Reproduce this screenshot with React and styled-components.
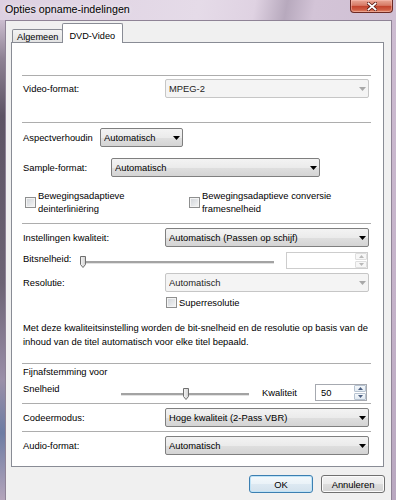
import React from "react";
import styled, { createGlobalStyle } from "styled-components";

const Global = createGlobalStyle`
  html, body { margin: 0; padding: 0; background: #d5c5d8; }
  body {
    font-family: "Liberation Sans", Arial, sans-serif;
    font-size: 9.4px;
    color: #000;
  }
  #root { width: 396px; height: 500px; overflow: hidden; }
`;

const Frame = styled.div`
  width: 396px;
  height: 500px;
  display: grid;
  grid-template-columns: 5px 1fr 4px;
  grid-template-rows: 20px 1fr;
  background: #d6c7d9;
  overflow: hidden;
`;

const TitleBar = styled.div`
  grid-column: 1 / 4;
  display: flex;
  align-items: flex-start;
  padding: 0 3px 0 5px;
  background: linear-gradient(100deg, #ddd0e1 0%, #e5dbe8 50%, #dfd2e2 64%, #b7a9bd 72%, #d3c4d7 79%, #d0c0d4 100%);
`;

const Title = styled.div`
  flex: 1;
  font-size: 10.7px;
  line-height: 18px;
  color: #000;
  white-space: nowrap;
  text-shadow: 0 0 5px rgba(255, 255, 255, 0.9);
`;

const CloseButton = styled.div`
  width: 43px;
  height: 13px;
  box-sizing: border-box;
  display: flex;
  align-items: center;
  justify-content: center;
  border: 1px solid #6d2a24;
  border-top: none;
  border-radius: 0 0 4px 4px;
  background: linear-gradient(#e9a796 0%, #d77a66 45%, #c2432d 52%, #cf5c43 80%, #e08d6e 100%);
  box-shadow: inset 0 0 0 1px rgba(255, 200, 190, 0.45);
`;

const SideLeft = styled.div`
  background: linear-gradient(#cbbdcf 0%, #8d8193 8%, #5c5363 20%, #6c6374 55%, #9a8fa8 75%, #6d7ca3 86%, #b4a5bb 100%);
`;

const SideRight = styled.div`
  background: linear-gradient(#cdbcd1 0%, #c4b2c9 60%, #b9a8c0 100%);
`;

const Client = styled.div`
  background: #f0f0f0;
  border: 1px solid #8f8396;
  border-bottom: none;
  display: flex;
  flex-direction: column;
  padding: 2px 7px 0 5px;
  min-width: 0;
`;

const TabStrip = styled.div`
  display: flex;
  align-items: flex-end;
  height: 19px;
  padding-left: 1px;
  position: relative;
  z-index: 1;
`;

const Tab = styled.div`
  box-sizing: border-box;
  height: ${(p) => (p.$active ? 20 : 13)}px;
  margin-bottom: ${(p) => (p.$active ? -1 : 0)}px;
  margin-left: ${(p) => (p.$active ? -1 : 0)}px;
  padding: ${(p) => (p.$active ? "7px 7px 0 6px" : "2px 4px 0 4px")};
  border: 1px solid #898c95;
  border-bottom: none;
  border-radius: 2px 2px 0 0;
  background: ${(p) => (p.$active ? "#fff" : "linear-gradient(#f3f3f3, #e3e3e3)")};
  font-size: 9.2px;
  line-height: 11px;
  white-space: nowrap;
`;

const Panel = styled.div`
  flex: none;
  height: 425px;
  box-sizing: border-box;
  border: 1px solid #898c95;
  background: #fff;
  padding: 32px 12px 0 10px;
  display: flex;
  flex-direction: column;
`;

const Divider = styled.div`
  flex: none;
  height: 1px;
  background: #adadad;
  margin-top: ${(p) => p.$mt || 0}px;
`;

const Row = styled.div`
  flex: none;
  display: flex;
  align-items: center;
  height: ${(p) => p.$h || 19}px;
  margin-top: ${(p) => p.$mt || 0}px;
`;

const Label = styled.div`
  flex: none;
  width: ${(p) => p.$w}px;
  box-sizing: border-box;
  padding-left: 1px;
  white-space: nowrap;
  line-height: 14px;
  align-self: ${(p) => (p.$top ? "flex-start" : "center")};
  margin-top: ${(p) => p.$mt || 0}px;
`;

const SelectBox = styled.div`
  flex: none;
  width: ${(p) => p.$w}px;
  height: 19px;
  box-sizing: border-box;
  display: flex;
  align-items: center;
  padding-left: 3px;
  border: 1px solid ${(p) => (p.$disabled ? "#c6c6c6" : "#7f7f7f")};
  border-radius: 2px;
  background: ${(p) =>
    p.$disabled ? "#f4f4f4" : "linear-gradient(#f3f3f3 0%, #ebebeb 50%, #dfdfdf 51%, #d4d4d4 100%)"};
  color: ${(p) => (p.$disabled ? "#1e1e1e" : "#000")};
`;

const SelectText = styled.span`
  flex: 1;
  white-space: nowrap;
  overflow: hidden;
`;

const Arrow = styled.svg`
  flex: none;
  margin-right: 2px;
`;

const CheckGroup = styled.div`
  flex: none;
  display: flex;
  align-items: center;
  gap: 2px;
  width: ${(p) => (p.$w ? `${p.$w}px` : "auto")};
  padding-left: ${(p) => p.$pl || 0}px;
  box-sizing: border-box;
  line-height: 13px;
  white-space: nowrap;
`;

const CheckBox = styled.div`
  flex: none;
  width: 11px;
  height: 11px;
  box-sizing: border-box;
  border: 1px solid #8e8f8f;
  background: linear-gradient(135deg, #cfd3d8 0%, #e6e8ea 60%, #f7f7f7 100%);
  box-shadow: inset 0 0 0 1px #f4f4f4;
`;

const Spacer = styled.div`
  flex: none;
  width: ${(p) => p.$w}px;
`;

const SliderWrap = styled.div`
  flex: none;
  position: relative;
  width: ${(p) => p.$w}px;
  height: 17px;
  align-self: flex-start;
`;

const Track = styled.div`
  position: absolute;
  left: 0;
  right: 0;
  top: ${(p) => p.$top}px;
  height: 2px;
  background: #a3a3a3;
  box-shadow: 0 1px 0 #e2e2e2;
`;

const Thumb = styled.svg`
  position: absolute;
  top: ${(p) => p.$top}px;
`;

const SpinBox = styled.div`
  flex: none;
  width: ${(p) => p.$w}px;
  height: 17px;
  box-sizing: border-box;
  display: flex;
  border: 1px solid ${(p) => (p.$disabled ? "#cdcdcd" : "#a6a9b0")};
  background: #fff;
  margin-left: ${(p) => p.$ml || 0}px;
`;

const SpinValue = styled.div`
  flex: 1;
  padding-left: 5px;
  line-height: 15px;
`;

const SpinButtons = styled.div`
  flex: none;
  width: 12px;
  display: flex;
  flex-direction: column;
  gap: 1px;
`;

const SpinButton = styled.div`
  flex: 1;
  display: flex;
  align-items: center;
  justify-content: center;
  border: 1px solid ${(p) => (p.$disabled ? "#dedede" : "#b7c3d1")};
  border-radius: 1px;
  background: ${(p) => (p.$disabled ? "#f7f7f7" : "linear-gradient(#f4f8fb, #e2eaf2)")};
`;

const Paragraph = styled.div`
  flex: none;
  margin-top: ${(p) => p.$mt || 0}px;
  padding-left: 1px;
  line-height: 14px;
  white-space: nowrap;
`;

const TextLine = styled.div`
  flex: none;
  margin-left: ${(p) => p.$ml || 0}px;
  width: ${(p) => (p.$w ? `${p.$w}px` : "auto")};
  white-space: nowrap;
`;

const ButtonRow = styled.div`
  flex: none;
  display: flex;
  justify-content: flex-end;
  gap: 8px;
  margin-top: 8px;
  margin-right: -1px;
`;

const Button = styled.div`
  width: 64px;
  height: 18px;
  box-sizing: border-box;
  display: flex;
  align-items: center;
  justify-content: center;
  border: 1px solid ${(p) => (p.$default ? "#3c7fb1" : "#707070")};
  border-radius: 3px;
  background: ${(p) =>
    p.$default
      ? "linear-gradient(#f4f9fc 0%, #eaf2f8 50%, #dde9f2 51%, #d3e1ec 100%)"
      : "linear-gradient(#f2f2f2 0%, #ebebeb 50%, #dddddd 51%, #d2d2d2 100%)"};
  box-shadow: inset 0 0 0 1px ${(p) => (p.$default ? "#bfe3f7" : "#fbfbfb")};
  white-space: nowrap;
`;

function Select({ w, disabled, children }) {
  return (
    <SelectBox $w={w} $disabled={disabled}>
      <SelectText>{children}</SelectText>
      <Arrow width="7" height="4" viewBox="0 0 7 4">
        <polygon points="0,0 7,0 3.5,4" fill={disabled ? "#a8a8a8" : "#000"} />
      </Arrow>
    </SelectBox>
  );
}

function Slider({ w, pos }) {
  return (
    <SliderWrap $w={w}>
      <Track $top={9} />
      <Thumb
        $top={4}
        width="6"
        height="12"
        viewBox="0 0 6 12"
        style={{ left: `${pos}px` }}
      >
        <defs>
          <linearGradient id={`tg${pos}`} x1="0" y1="0" x2="1" y2="0">
            <stop offset="0" stopColor="#f6f6f6" />
            <stop offset="1" stopColor="#cfcfcf" />
          </linearGradient>
        </defs>
        <path d="M0.5 0.5 H5.5 V8.5 L3 11.5 L0.5 8.5 Z" fill={`url(#tg${pos})`} stroke="#6f6f6f" strokeWidth="1" />
      </Thumb>
    </SliderWrap>
  );
}

function Spin({ w, ml, disabled, value }) {
  const c = disabled ? "#b9b9b9" : "#4b5f82";
  return (
    <SpinBox $w={w} $ml={ml} $disabled={disabled}>
      <SpinValue>{value}</SpinValue>
      <SpinButtons>
        <SpinButton $disabled={disabled}>
          <svg width="5" height="3" viewBox="0 0 5 3">
            <polygon points="0,3 5,3 2.5,0" fill={c} />
          </svg>
        </SpinButton>
        <SpinButton $disabled={disabled}>
          <svg width="5" height="3" viewBox="0 0 5 3">
            <polygon points="0,0 5,0 2.5,3" fill={c} />
          </svg>
        </SpinButton>
      </SpinButtons>
    </SpinBox>
  );
}

export default function App() {
  return (
    <>
      <Global />
      <Frame>
        <TitleBar>
          <Title>Opties opname-indelingen</Title>
          <CloseButton>
            <svg width="10" height="9" viewBox="0 0 10 9">
              <path d="M1.5 1.5 L8.5 7.5 M8.5 1.5 L1.5 7.5" stroke="#5a1a14" strokeWidth="3.4" strokeLinecap="square" />
              <path d="M1.5 1.5 L8.5 7.5 M8.5 1.5 L1.5 7.5" stroke="#fff" strokeWidth="1.8" strokeLinecap="square" />
            </svg>
          </CloseButton>
        </TitleBar>
        <SideLeft />
        <Client>
          <TabStrip>
            <Tab>Algemeen</Tab>
            <Tab $active>DVD-Video</Tab>
          </TabStrip>
          <Panel>
            <Divider />
            <Row $mt={3}>
              <Label $w={143}>Video-format:</Label>
              <Select w={204} disabled>MPEG-2</Select>
            </Row>
            <Divider $mt={24} />
            <Row $mt={5}>
              <Label $w={78}>Aspectverhoudin</Label>
              <Select w={83}>Automatisch</Select>
            </Row>
            <Row $mt={11}>
              <Label $w={89}>Sample-format:</Label>
              <Select w={209}>Automatisch</Select>
            </Row>
            <Row $mt={12} $h={26}>
              <CheckGroup $w={167} $pl={3}>
                <CheckBox />
                <div>
                  Bewegingsadaptieve
                  <br />
                  deinterliniëring
                </div>
              </CheckGroup>
              <CheckGroup>
                <CheckBox />
                <div>
                  Bewegingsadaptieve conversie
                  <br />
                  framesnelheid
                </div>
              </CheckGroup>
            </Row>
            <Divider $mt={8} />
            <Row $mt={4}>
              <Label $w={143}>Instellingen kwaliteit:</Label>
              <Select w={204}>Automatisch (Passen op schijf)</Select>
            </Row>
            <Row $mt={5} $h={17}>
              <Label $w={58} $top>Bitsnelheid:</Label>
              <Slider w={194} pos={0} />
              <Spin w={82} ml={12} disabled value="" />
            </Row>
            <Row $mt={4}>
              <Label $w={143}>Resolutie:</Label>
              <Select w={204} disabled>Automatisch</Select>
            </Row>
            <Row $mt={4} $h={13}>
              <Spacer $w={144} />
              <CheckGroup>
                <CheckBox />
                <div>Superresolutie</div>
              </CheckGroup>
            </Row>
            <Paragraph $mt={12}>
              Met deze kwaliteitsinstelling worden de bit-snelheid en de resolutie op basis van de
              <br />
              inhoud van de titel automatisch voor elke titel bepaald.
            </Paragraph>
            <Divider $mt={14} />
            <Paragraph $mt={1}>Fijnafstemming voor</Paragraph>
            <Row $mt={5} $h={17}>
              <Label $w={99} $top $mt={-2}>Snelheid</Label>
              <Slider w={128} pos={62} />
              <TextLine $ml={13} $w={53}>Kwaliteit</TextLine>
              <Spin w={52} value="50" />
            </Row>
            <Divider $mt={2} />
            <Row $mt={4}>
              <Label $w={143}>Codeermodus:</Label>
              <Select w={204}>Hoge kwaliteit (2-Pass VBR)</Select>
            </Row>
            <Divider $mt={4} />
            <Row $mt={4}>
              <Label $w={143}>Audio-format:</Label>
              <Select w={204}>Automatisch</Select>
            </Row>
          </Panel>
          <ButtonRow>
            <Button $default>OK</Button>
            <Button>Annuleren</Button>
          </ButtonRow>
        </Client>
        <SideRight />
      </Frame>
    </>
  );
}
